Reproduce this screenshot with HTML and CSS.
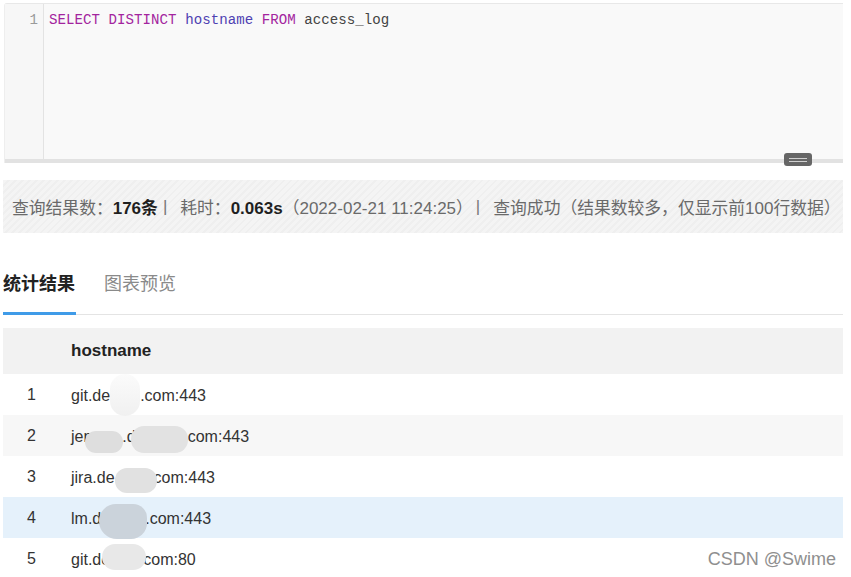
FILE: index.html
```html
<!DOCTYPE html>
<html lang="zh">
<head>
<meta charset="utf-8">
<title>SQL 查询</title>
<link rel="stylesheet" href="styles.css">
</head>
<body>
<div class="page">
  <div class="editor">
    <div class="editor-body">
      <div class="gutter"><span class="ln">1</span></div>
      <div class="code"><span class="kw">SELECT</span> <span class="kw">DISTINCT</span> <span class="id">hostname</span> <span class="kw">FROM</span> <span class="plain">access_log</span></div>
    </div>
    <div class="editor-foot">
      <span class="handle"><i></i><i></i></span>
    </div>
  </div>

  <div class="status">
    <span>查询结果数：</span><b class="lead"><span class="lat">176</span>条</b><span class="sep">|</span><span class="gap">耗时：</span><b><span class="lat">0.063s</span></b><span>（<span class="lat">2022-02-21 11:24:25</span>）</span><span class="sep2">|</span><span class="gap">查询成功（结果数较多，仅显示前<span class="lat">100</span>行数据）</span>
  </div>

  <div class="tabs">
    <div class="tab active">统计结果</div>
    <div class="tab">图表预览</div>
  </div>

  <div class="table">
    <div class="row head"><div class="c-idx"></div><div class="c-val">hostname</div></div>
    <div class="row"><div class="c-idx">1</div><div class="c-val">git.dev<span class="mask m1"><i class="blob b1"></i></span>.com:443</div></div>
    <div class="row alt"><div class="c-idx">2</div><div class="c-val">jen<span class="mask m2a"><i class="blob b2a"></i></span>.d<span class="mask m2b"><i class="blob b2b"></i></span>com:443</div></div>
    <div class="row"><div class="c-idx">3</div><div class="c-val">jira.de<span class="mask m3"><i class="blob b3"></i></span>com:443</div></div>
    <div class="row hover"><div class="c-idx">4</div><div class="c-val">lm.d<span class="mask m4"><i class="blob b4"></i></span>.com:443</div></div>
    <div class="row"><div class="c-idx">5</div><div class="c-val">git.dc<span class="mask m5"><i class="blob b5"></i></span>com:80</div></div>
  </div>

  <div class="watermark">CSDN @Swime</div>
</div>
</body>
</html>
```

FILE: styles.css
```css
html, body {
  margin: 0;
  padding: 0;
  background: #ffffff;
}

.page {
  position: relative;
  width: 851px;
  height: 577px;
  overflow: hidden;
  padding: 3px 8px 0 3px;
  box-sizing: border-box;
  font-family: "Liberation Sans", Arial, "Noto Sans CJK SC", sans-serif;
  color: #333;
}

/* ---------- editor ---------- */
.editor {
  margin-left: 1px;
  border-top: 1px solid #e8e8e8;
  border-left: 1px solid #eeeeee;
  border-radius: 3px 0 0 0;
  background: #f9f9f9;
}

.editor-body {
  display: flex;
  height: 155px;
}

.gutter {
  width: 39px;
  background: #f7f7f7;
  border-right: 1px solid #e3e3e3;
  text-align: right;
  padding-right: 5px;
  box-sizing: border-box;
}

.ln,
.code {
  display: block;
  font-family: "Liberation Mono", "Courier New", monospace;
  font-size: 14.1px;
  line-height: 17px;
  padding-top: 8px;
}

.ln {
  color: #9a9a9a;
}

.code {
  padding-left: 5px;
  letter-spacing: 0.05px;
  white-space: pre;
}

.kw { color: #a3249e; }
.id { color: #4e3fb2; }
.plain { color: #444; }

.editor-foot {
  position: relative;
  height: 4px;
  background: #e2e2e2;
}

.handle {
  position: absolute;
  left: 779px;
  top: -6px;
  width: 28px;
  height: 13px;
  background: #666;
  border-radius: 3px;
  display: flex;
  flex-direction: column;
  justify-content: center;
  align-items: center;
  gap: 2px;
}

.handle i {
  display: block;
  width: 18px;
  height: 1px;
  background: #d0d0d0;
}

/* ---------- status bar ---------- */
.status {
  margin-top: 17px;
  height: 53px;
  display: flex;
  align-items: center;
  padding-left: 9px;
  font-size: 16.8px;
  color: #6a6a6a;
  white-space: nowrap;
  background: repeating-linear-gradient(135deg, #f4f4f4 0 3px, #efefef 3px 5px);
  font-family: "Noto Sans CJK SC", sans-serif;
}

.status .lat {
  font-family: "Liberation Sans", Arial, sans-serif;
  font-size: 17px;
}

.status b {
  color: #1f1f1f;
  font-weight: bold;
}

.status b.lead {
  margin-left: 0;
}

.status .sep,
.status .sep2 {
  font-family: "Liberation Sans", Arial, sans-serif;
  font-size: 17px;
  color: #777;
}

.status .sep { margin-left: 5px; }
.status .sep2 { margin-left: 3px; }

.status .gap {
  margin-left: 13px;
}

/* ---------- tabs ---------- */
.tabs {
  margin-top: 36px;
  display: flex;
  gap: 28px;
  border-bottom: 1px solid #e4e4e4;
  padding-left: 1px;
}

.tab {
  font-family: "Noto Sans CJK SC", sans-serif;
  font-size: 18px;
  line-height: 26px;
  padding-bottom: 17px;
  color: #8a8a8a;
  border-bottom: 3px solid transparent;
  margin-bottom: -1px;
  width: 72px;
}

.tab.active {
  color: #222;
  font-weight: bold;
  border-bottom-color: #3f9be8;
  width: 73px;
  margin-left: -1px;
}

/* ---------- table ---------- */
.table {
  margin-top: 13px;
}

.row {
  display: flex;
  align-items: center;
  height: 41px;
  font-size: 16px;
  color: #333;
}

.row.head {
  height: 46px;
  background: #f2f2f2;
  font-weight: bold;
  font-size: 17px;
  color: #222;
}

.row.alt { background: #f7f7f7; }
.row.hover { background: #e5f1fb; }

.c-idx {
  width: 68px;
  padding-left: 24px;
  box-sizing: border-box;
}

.c-val {
  white-space: nowrap;
}

.mask {
  position: relative;
  display: inline-block;
  height: 1em;
  vertical-align: baseline;
}

.m1 { width: 22px; }
.m2a { width: 30px; }
.m2b { width: 52px; }
.m3 { width: 39px; }
.m4 { width: 44px; }
.m5 { width: 34px; }

.blob {
  position: absolute;
  display: block;
}

.b1 {
  left: -8px; top: -11px; width: 30px; height: 42px;
  background: linear-gradient(#fbfbfb, #f0f0f0);
  border-radius: 15px;
}
.b2a {
  left: -7px; top: 5px; width: 38px; height: 22px;
  background: #dedede;
  border-radius: 11px;
}
.b2b {
  left: -5px; top: 0px; width: 57px; height: 27px;
  background: #e2e2e2;
  border-radius: 13px;
}
.b3 {
  left: 0px; top: 1px; width: 42px; height: 25px;
  background: #e1e1e1;
  border-radius: 12px;
}
.b4 {
  left: -2px; top: -4px; width: 48px; height: 35px;
  background: #cbd3db;
  border-radius: 17px 14px 16px 18px;
}
.b5 {
  left: -7px; top: -5px; width: 44px; height: 26px;
  background: #e8e8e8;
  border-radius: 13px;
}

/* ---------- watermark ---------- */
.watermark {
  position: absolute;
  right: 15px;
  bottom: 7px;
  font-size: 18px;
  color: #8f8f8f;
  font-family: "Liberation Sans", Arial, sans-serif;
}
```
